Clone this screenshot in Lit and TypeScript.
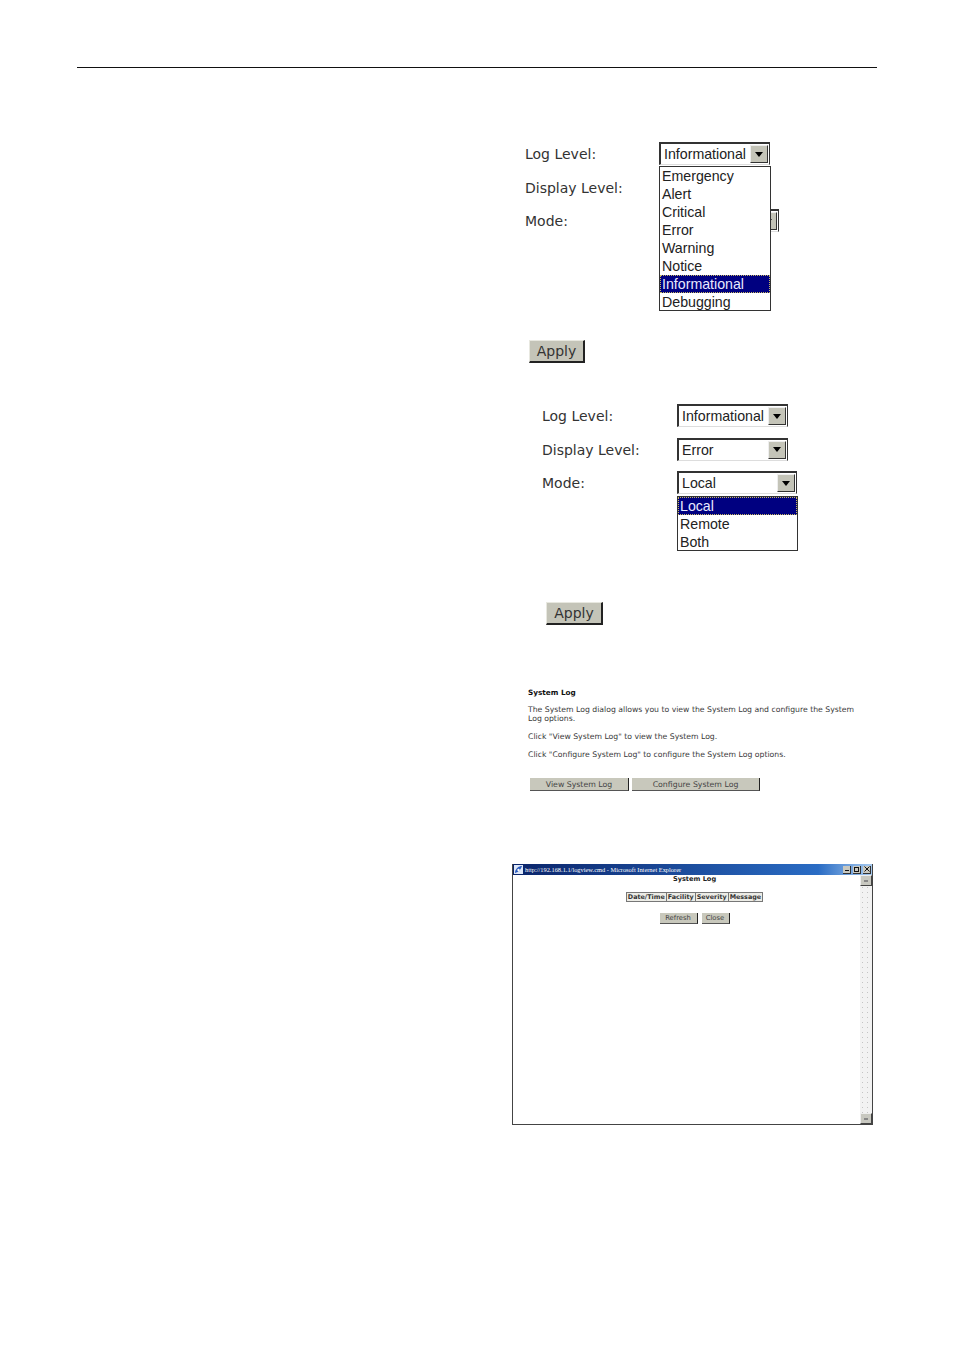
import { LitElement, html, css, svg } from "lit";
import { customElement } from "lit/decorators.js";

const arrow = svg`<svg width="8" height="5" viewBox="0 0 8 5"><polygon points="0,0 8,0 4,5" fill="#000"/></svg>`;

@customElement("app-root")
export class AppRoot extends LitElement {
  static styles = css`
    :host { display: block; width: 954px; height: 1350px; background: #fff; overflow: hidden; color: #222; font-family: "DejaVu Sans", sans-serif; }
    .page { padding: 67px 77px 0; }
    .rule { height: 1px; background: #111; }
    .fig { position: relative; }
    .fig1 { margin: 74px 0 0 448px; }
    .fig2 { margin: 41px 0 0 465px; }
    .form { display: grid; grid-template-columns: 135px 1fr; row-gap: 10.5px; grid-auto-rows: 23px; width: 300px; }
    .fig1 .form { grid-template-columns: 134px 1fr; }
    .label { font-size: 14px; line-height: 23px; padding-top: 1px; color: #333; }
    .select { box-sizing: border-box; height: 23px; width: 111px; display: flex; align-items: center; justify-content: space-between; background: #fff; border-style: solid; border-color: #333 #333 #ddd #333; border-width: 2px 1px 1px 2px; font: 14.2px "Liberation Sans", sans-serif; color: #222; padding: 0 0 0 3px; }
    .select.wide { width: 120px; }
    .arrow { box-sizing: border-box; width: 18px; height: 18px; margin-right: 1px; display: flex; align-items: center; justify-content: center; background: #c4c4b8; border-style: solid; border-color: #eee #333 #333 #eee; border-width: 1px; }
    .list { position: absolute; box-sizing: border-box; background: #fff; border: 1px solid #333; font: 14.2px/18px "Liberation Sans", sans-serif; color: #222; }
    .list1 { left: 134px; top: 24px; width: 112px; height: 145px; }
    .list2 { left: 135px; top: 92px; width: 121px; height: 55px; }
    .item { height: 18px; padding-left: 2px; white-space: nowrap; }
    .item.sel { background: #000080; color: #e8e8ff; outline: 1px dotted #c8b860; outline-offset: -1px; }
    .apply { box-sizing: border-box; width: 57px; height: 23px; display: flex; align-items: center; justify-content: center; background: #c4c4b8; border-style: solid; border-color: #e8e8e0 #222 #222 #e8e8e0; border-width: 1px 2px 2px 1px; font-size: 14px; color: #333; }
    .fig1 .apply { margin: 108px 0 0 4px; width: 56px; }
    .fig2 .apply { margin: 108px 0 0 4px; }
    .info { margin: 63px 0 0 451px; width: 335px; font-size: 7.72px; line-height: 9px; color: #3a3a3a; }
    .info p { margin: 0 0 9px; }
    .info .head { font-weight: 700; color: #111; margin-bottom: 8px; font-size: 7.3px; }
    .btns { display: flex; gap: 3px; margin: 19px 0 0 2px; }
    .flat { box-sizing: border-box; height: 13px; display: flex; align-items: center; justify-content: center; background: #c8c8bc; border-right: 1px solid #222; border-bottom: 1px solid #555; font-size: 7.8px; color: #444; }
    .b1 { width: 99px; }
    .b2 { width: 128px; }
    .win { box-sizing: border-box; margin: 73px 0 0 435px; width: 361px; height: 261px; border: 1px solid #444; border-width: 0 1px 1px 1px; display: flex; flex-direction: column; background: #fff; }
    .title { height: 11px; flex: none; display: flex; align-items: center; gap: 2px; padding: 0 1px 0 1px; background: linear-gradient(90deg, #0a246a, #2a6cc4 85%, #a6caf0); color: #fff; font: 6.4px/11px "Liberation Serif", serif; }
    .title span { flex: 1; white-space: nowrap; }
    .ctl { box-sizing: border-box; width: 8px; height: 8px; background: #c8c8c0; border-right: 1px solid #333; border-bottom: 1px solid #333; display: flex; align-items: center; justify-content: center; }
    .body { flex: 1; display: flex; min-height: 0; }
    .main { flex: 1; padding-left: 16px; display: flex; flex-direction: column; align-items: center; }
    .wt { font-size: 6.6px; line-height: 9px; font-weight: 700; color: #222; }
    table { border-collapse: collapse; margin-top: 8px; font-size: 6.4px; line-height: 8px; font-weight: 700; color: #333; background: #ecece6; }
    td { border: 1px solid #777; padding: 0 1px; white-space: nowrap; }
    .wbtns { display: flex; gap: 4px; margin-top: 11px; }
    .wbtns .flat { height: 11px; font-size: 6.8px; }
    .wb1 { width: 38px; }
    .wb2 { width: 28px; }
    .scroll { width: 12px; flex: none; display: flex; flex-direction: column; justify-content: space-between; background: radial-gradient(circle, #c4c4c4 0.6px, transparent 0.8px) 0 0 / 5px 5px #f2f2f2; }
    .sb { box-sizing: border-box; height: 11px; background: #c8c8c0; border-style: solid; border-color: #eee #444 #444 #eee; border-width: 1px; display: flex; align-items: center; justify-content: center; }
    .sb i { display: block; width: 4px; height: 2px; background: #888; }
  `;

  private sel(text: string, wide = false) {
    return html`<div class="select ${wide ? "wide" : ""}"><span>${text}</span><div class="arrow">${arrow}</div></div>`;
  }

  private list(cls: string, items: string[], active: string) {
    return html`<div class="list ${cls}">${items.map((i) => html`<div class="item ${i === active ? "sel" : ""}">${i}</div>`)}</div>`;
  }

  render() {
    return html`<div class="page">
      <div class="rule"></div>
      <div class="fig fig1">
        <div class="form">
          <div class="label">Log Level:</div>${this.sel("Informational")}
          <div class="label">Display Level:</div>${this.sel("")}
          <div class="label">Mode:</div>${this.sel("", true)}
        </div>
        ${this.list("list1", ["Emergency", "Alert", "Critical", "Error", "Warning", "Notice", "Informational", "Debugging"], "Informational")}
        <div class="apply">Apply</div>
      </div>
      <div class="fig fig2">
        <div class="form">
          <div class="label">Log Level:</div>${this.sel("Informational")}
          <div class="label">Display Level:</div>${this.sel("Error")}
          <div class="label">Mode:</div>${this.sel("Local", true)}
        </div>
        ${this.list("list2", ["Local", "Remote", "Both"], "Local")}
        <div class="apply">Apply</div>
      </div>
      <div class="info">
        <p class="head">System Log</p>
        <p>The System Log dialog allows you to view the System Log and configure the System Log options.</p>
        <p>Click "View System Log" to view the System Log.</p>
        <p>Click "Configure System Log" to configure the System Log options.</p>
        <div class="btns"><div class="flat b1">View System Log</div><div class="flat b2">Configure System Log</div></div>
      </div>
      <div class="win">
        <div class="title">
          <svg width="9" height="9" viewBox="0 0 9 9"><rect width="9" height="9" fill="#dfe8f8"/><path d="M1 7C2 3 5 1 8 1 7 4 5 7 1 8Z" fill="#2a5cc0"/><circle cx="4.5" cy="5" r="1.2" fill="#fff"/></svg>
          <span>http://192.168.1.1/logview.cmd - Microsoft Internet Explorer</span>
          <div class="ctl"><svg width="4" height="6" viewBox="0 0 4 6"><rect y="4" width="4" height="1" fill="#111"/></svg></div>
          <div class="ctl"><svg width="5" height="5" viewBox="0 0 5 5"><rect x=".5" y=".5" width="4" height="4" fill="none" stroke="#111"/></svg></div>
          <div class="ctl"><svg width="6" height="6" viewBox="0 0 6 6"><path d="M.5 .5L5.5 5.5M5.5 .5L.5 5.5" stroke="#111"/></svg></div>
        </div>
        <div class="body">
          <div class="main">
            <div class="wt">System Log</div>
            <table><tr><td>Date/Time</td><td>Facility</td><td>Severity</td><td>Message</td></tr></table>
            <div class="wbtns"><div class="flat wb1">Refresh</div><div class="flat wb2">Close</div></div>
          </div>
          <div class="scroll"><div class="sb"><i></i></div><div class="sb"><i></i></div></div>
        </div>
      </div>
    </div>`;
  }
}
